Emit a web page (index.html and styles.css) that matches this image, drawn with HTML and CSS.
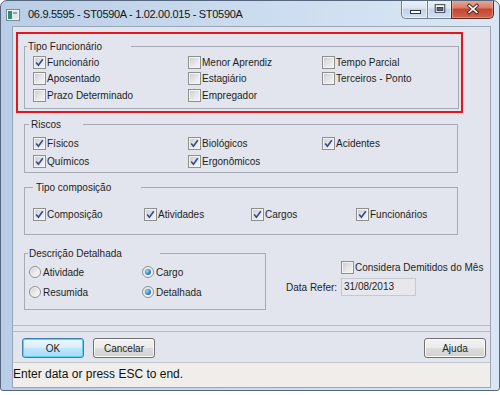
FILE: index.html
```html
<!DOCTYPE html>
<html lang="pt">
<head>
<meta charset="utf-8">
<title>ST0590A</title>
<link rel="stylesheet" href="styles.css">
</head>
<body>
<div class="window">
  <div class="titlebar">
    <svg class="app-icon" width="14" height="12" viewBox="0 0 14 12">
      <rect x="0.5" y="0.5" width="13" height="11" fill="#f3f5f7" stroke="#7d8896"/>
      <rect x="2" y="2" width="4" height="8" fill="#2f8f73"/>
      <rect x="6" y="2" width="6" height="8" fill="#dfe6ee"/>
      <rect x="7" y="3" width="4" height="2" fill="#8aa3c0"/>
    </svg>
    <span class="title">06.9.5595 - ST0590A - 1.02.00.015 - ST0590A</span>
    <div class="controls">
      <div class="ctl ctl-min">
        <svg width="24" height="18" viewBox="0 0 24 18"><rect x="7.5" y="10.5" width="10" height="3" fill="#fff" stroke="#2c3440"/></svg>
      </div>
      <div class="ctl ctl-max">
        <svg width="24" height="18" viewBox="0 0 24 18"><rect x="7.5" y="4.5" width="10" height="8" fill="#fff" stroke="#2c3440"/><rect x="9.5" y="7.5" width="6" height="3" fill="#5b6b80" stroke="#2c3440"/></svg>
      </div>
      <div class="ctl ctl-close">
        <svg width="43" height="18" viewBox="0 0 43 18"><path d="M18 5.5 L26 12.5 M26 5.5 L18 12.5" stroke="#4a1a14" stroke-width="3.6" stroke-linecap="square"/><path d="M18 5.5 L26 12.5 M26 5.5 L18 12.5" stroke="#ffffff" stroke-width="1.8" stroke-linecap="square"/></svg>
      </div>
    </div>
  </div>

  <div class="client">
    <div class="main">
      <div class="highlight">
        <fieldset class="group g-tipo">
          <legend>Tipo Funcionário</legend>
          <div class="opts">
            <span class="opt"><span class="cb"><svg width="11" height="11" viewBox="0 0 11 11"><path d="M2.2 5.6 L4.4 8.2 L8.8 2.3" fill="none" stroke="#34488f" stroke-width="1.6"/></svg></span>Funcionário</span>
            <span class="opt"><span class="cb"></span>Menor Aprendiz</span>
            <span class="opt"><span class="cb"></span>Tempo Parcial</span>
            <span class="opt"><span class="cb"></span>Aposentado</span>
            <span class="opt"><span class="cb"></span>Estagiário</span>
            <span class="opt"><span class="cb"></span>Terceiros - Ponto</span>
            <span class="opt"><span class="cb"></span>Prazo Determinado</span>
            <span class="opt"><span class="cb"></span>Empregador</span>
          </div>
        </fieldset>
      </div>

      <fieldset class="group g-riscos">
        <legend>Riscos</legend>
        <div class="opts">
          <span class="opt"><span class="cb"><svg width="11" height="11" viewBox="0 0 11 11"><path d="M2.2 5.6 L4.4 8.2 L8.8 2.3" fill="none" stroke="#34488f" stroke-width="1.6"/></svg></span>Físicos</span>
          <span class="opt"><span class="cb"><svg width="11" height="11" viewBox="0 0 11 11"><path d="M2.2 5.6 L4.4 8.2 L8.8 2.3" fill="none" stroke="#34488f" stroke-width="1.6"/></svg></span>Biológicos</span>
          <span class="opt"><span class="cb"><svg width="11" height="11" viewBox="0 0 11 11"><path d="M2.2 5.6 L4.4 8.2 L8.8 2.3" fill="none" stroke="#34488f" stroke-width="1.6"/></svg></span>Acidentes</span>
          <span class="opt"><span class="cb"><svg width="11" height="11" viewBox="0 0 11 11"><path d="M2.2 5.6 L4.4 8.2 L8.8 2.3" fill="none" stroke="#34488f" stroke-width="1.6"/></svg></span>Químicos</span>
          <span class="opt"><span class="cb"><svg width="11" height="11" viewBox="0 0 11 11"><path d="M2.2 5.6 L4.4 8.2 L8.8 2.3" fill="none" stroke="#34488f" stroke-width="1.6"/></svg></span>Ergonômicos</span>
        </div>
      </fieldset>

      <fieldset class="group g-comp">
        <legend>Tipo composição</legend>
        <div class="opts">
          <span class="opt"><span class="cb"><svg width="11" height="11" viewBox="0 0 11 11"><path d="M2.2 5.6 L4.4 8.2 L8.8 2.3" fill="none" stroke="#34488f" stroke-width="1.6"/></svg></span>Composição</span>
          <span class="opt"><span class="cb"><svg width="11" height="11" viewBox="0 0 11 11"><path d="M2.2 5.6 L4.4 8.2 L8.8 2.3" fill="none" stroke="#34488f" stroke-width="1.6"/></svg></span>Atividades</span>
          <span class="opt"><span class="cb"><svg width="11" height="11" viewBox="0 0 11 11"><path d="M2.2 5.6 L4.4 8.2 L8.8 2.3" fill="none" stroke="#34488f" stroke-width="1.6"/></svg></span>Cargos</span>
          <span class="opt"><span class="cb"><svg width="11" height="11" viewBox="0 0 11 11"><path d="M2.2 5.6 L4.4 8.2 L8.8 2.3" fill="none" stroke="#34488f" stroke-width="1.6"/></svg></span>Funcionários</span>
        </div>
      </fieldset>

      <div class="bottom-row">
        <fieldset class="group g-desc">
          <legend>Descrição Detalhada</legend>
          <div class="opts">
            <span class="opt"><span class="rb"></span>Atividade</span>
            <span class="opt"><span class="rb on"><span class="dot"></span></span>Cargo</span>
            <span class="opt"><span class="rb"></span>Resumida</span>
            <span class="opt"><span class="rb on"><span class="dot"></span></span>Detalhada</span>
          </div>
        </fieldset>
        <div class="extra">
          <span class="opt opt-dem"><span class="cb"></span>Considera Demitidos do Mês</span>
          <div class="data-row">
            <span class="data-label">Data Refer:</span>
            <span class="field">31/08/2013</span>
          </div>
        </div>
      </div>
    </div>

    <div class="buttonbar">
      <button class="btn btn-default" type="button">OK</button>
      <button class="btn" type="button">Cancelar</button>
      <button class="btn btn-help" type="button">Ajuda</button>
    </div>

    <div class="statusbar">Enter data or press ESC to end.</div>
  </div>
</div>
</body>
</html>
```

FILE: styles.css
```css
* { box-sizing: border-box; }

html, body {
  margin: 0;
  padding: 0;
  background: #ffffff;
}

body {
  font-family: "Liberation Sans", Arial, sans-serif;
  font-size: 10px;
  color: #1e1e1e;
}

.window {
  width: 500px;
  height: 391px;
  border: 1px solid #56677d;
  border-radius: 7px 7px 3px 3px;
  background: linear-gradient(to right, #b9cde6 0%, #c6d8ed 35%, #d3e2f2 75%, #dae6f3 100%);
  display: flex;
  flex-direction: column;
  overflow: hidden;
}

/* ---------- title bar ---------- */
.titlebar {
  height: 25px;
  flex: none;
  display: flex;
  align-items: flex-start;
}

.app-icon {
  flex: none;
  margin: 8px 0 0 5px;
}

.title {
  margin: 7px 0 0 8px;
  font-size: 11px;
  line-height: 13px;
  letter-spacing: -0.3px;
  color: #151515;
  white-space: nowrap;
}

.controls {
  margin: -1px 5px 0 auto;
  display: flex;
  flex: none;
}

.ctl {
  height: 19px;
  display: flex;
  align-items: center;
  justify-content: center;
}

.ctl-min,
.ctl-max {
  width: 25px;
  border-bottom: 1px solid #6f7f95;
  border-left: 1px solid #6f7f95;
  background: linear-gradient(#eaf1f9 0%, #dbe6f2 45%, #c4d4e7 50%, #d0def0 100%);
  box-shadow: inset 0 0 0 1px rgba(255,255,255,.55);
}

.ctl-min {
  width: 26px;
  border-bottom-left-radius: 5px;
}

.ctl-max {
  width: 24px;
}

.ctl-close {
  width: 43px;
  border: 1px solid #5f2a22;
  border-top: none;
  border-bottom-right-radius: 5px;
  background: linear-gradient(#e9ad9d 0%, #d87a66 45%, #c5452f 50%, #cf6550 100%);
  box-shadow: inset 0 0 0 1px rgba(255,220,210,.35);
}

.ctl svg { display: block; }

/* ---------- client ---------- */
.client {
  flex: none;
  width: 479px;
  margin: 0 8px 0 11px;
  border: 1px solid #9aa5b6;
  background: #e2e5ed;
  display: flex;
  flex-direction: column;
}

.main {
  height: 299px;
  border-bottom: 1px solid #b5bac4;
  padding-top: 5px;
}

.highlight {
  width: 447px;
  margin-left: 3px;
  border: 2px solid #e3161e;
  padding: 6px 0 2px 6px;
}

/* ---------- group boxes ---------- */
.group {
  margin: 0;
  padding: 0;
  min-width: 0;
  border: 1px solid #a7abb3;
}

.group legend {
  padding: 0;
  height: 13px;
  line-height: 13px;
  color: #1e1e1e;
}

.opts {
  display: grid;
  padding-left: 8px;
}

.opt {
  display: flex;
  align-items: center;
  white-space: nowrap;
}

.g-tipo { width: 435px; }
.g-tipo legend { margin-left: 2px; padding-left: 1px; width: 104px; }
.g-tipo .opts {
  padding-top: 1px;
  padding-bottom: 4.5px;
  grid-template-columns: 155px 134px 1fr;
  grid-auto-rows: 16.5px;
}

.g-riscos {
  width: 434px;
  margin: 5px 0 0 11px;
}
.g-riscos legend { margin-left: 4px; padding-left: 2px; width: 54px; }
.g-riscos .opts {
  padding-top: 3px;
  padding-bottom: 2px;
  grid-template-columns: 155px 134px 1fr;
  grid-auto-rows: 18px;
}

.g-comp {
  width: 434px;
  margin: 8px 0 0 11px;
}
.g-comp legend { margin-left: 8px; padding-left: 3px; width: 108px; }
.g-comp .opts {
  padding-top: 11px;
  padding-bottom: 11px;
  grid-template-columns: 111px 107px 105px 1fr;
  grid-auto-rows: 18px;
}

.bottom-row {
  display: flex;
  align-items: flex-start;
  margin: 12px 0 0 11px;
}

.g-desc { width: 242px; flex: none; }
.g-desc legend { margin-left: 3px; padding-left: 1px; width: 132px; }
.g-desc .opts {
  padding-left: 4px;
  padding-top: 2px;
  padding-bottom: 7px;
  grid-template-columns: 113px 1fr;
  grid-auto-rows: 20px;
}

/* ---------- checkbox / radio ---------- */
.cb {
  flex: none;
  width: 13px;
  height: 13px;
  margin-right: 1px;
  border: 1px solid #8e8f8f;
  background: linear-gradient(135deg, #c6c9ce 0%, #e6e7e9 55%, #f6f6f6 100%);
  box-shadow: inset 0 0 0 1px #f3f3f3;
  display: flex;
  align-items: center;
  justify-content: center;
}

.cb svg { display: block; }

.rb {
  flex: none;
  width: 12px;
  height: 12px;
  margin-right: 2px;
  border: 1px solid #8e8f8f;
  border-radius: 50%;
  background: linear-gradient(135deg, #c9cbcf 0%, #eeeeef 60%, #fbfbfb 100%);
  box-shadow: inset 0 0 0 1px #f5f5f5;
  display: flex;
  align-items: center;
  justify-content: center;
}

.rb .dot {
  width: 6px;
  height: 6px;
  border-radius: 50%;
  background: radial-gradient(circle at 35% 35%, #9bd8ff 0%, #2a86d0 55%, #14508e 100%);
}

/* ---------- right side extras ---------- */
.extra {
  margin-left: 20px;
  padding-top: 14px;
  display: flex;
  flex-direction: column;
}

.opt-dem {
  margin-left: 55px;
  height: 13px;
}

.data-row {
  margin-top: 4px;
  display: flex;
  align-items: center;
}

.data-label {
  width: 55px;
  flex: none;
}

.field {
  width: 75px;
  height: 18px;
  line-height: 16px;
  padding-left: 2px;
  border: 1px solid #c6c9cf;
  background: #e7e8ec;
}

/* ---------- buttons ---------- */
.buttonbar {
  margin-top: 5px;
  height: 31px;
  border-top: 1px solid #b5bac4;
  display: flex;
  align-items: flex-start;
  gap: 9px;
  padding: 6px 4px 0 9px;
}

.btn {
  width: 62px;
  height: 20px;
  padding: 0;
  margin: 0;
  font-family: "Liberation Sans", Arial, sans-serif;
  font-size: 10px;
  color: #1e1e1e;
  border: 1px solid #707070;
  border-radius: 3px;
  background: linear-gradient(#f3f3f3 0%, #ebebeb 48%, #dddddd 52%, #cfcfcf 100%);
  box-shadow: inset 0 0 0 1px #fbfbfb;
}

.btn-default {
  border-color: #3c7fb1;
  background: linear-gradient(#eaf6fd 0%, #d9f0fc 48%, #bee6fd 52%, #a9dbf6 100%);
  box-shadow: inset 0 0 0 1px #5fd0f5;
}

.btn-help { margin-left: auto; }

/* ---------- status bar ---------- */
.statusbar {
  height: 25px;
  border-top: 1px solid #c3c7cf;
  background: #f0eeeb;
  font-size: 12px;
  line-height: 22px;
  color: #111;
  padding-left: 0;
  white-space: nowrap;
}
```
